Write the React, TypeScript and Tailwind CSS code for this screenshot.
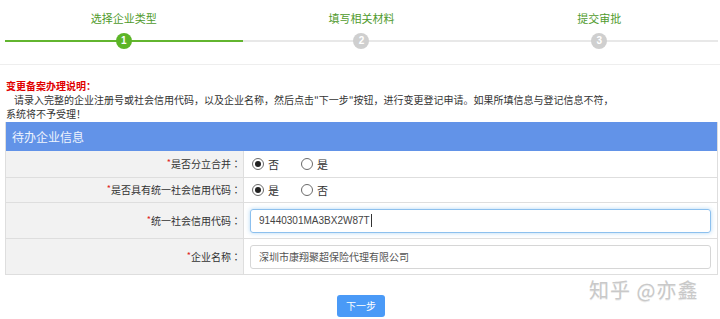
import React from 'react'

const font = { fontFamily: '"Microsoft YaHei", "Noto Sans CJK SC", "Noto Sans", sans-serif' }
const latin = { fontFamily: '"Liberation Sans", Arial, "Noto Sans CJK SC", sans-serif' }
const centered = { fontFamily: '"Noto Sans CJK JP", "Noto Sans CJK SC", sans-serif' }

function Step({ n, label, active }: { n: number; label: string; active: boolean }) {
  return (
    <div className="flex flex-col items-center">
      <div className="h-[33px] flex items-center text-[11px] leading-[14px] text-[#4f9a2c] pt-[3px]">{label}</div>
      <div className="relative w-full h-[16px] flex items-center justify-center">
        <div className={`absolute left-0 right-0 top-[7px] h-[2px] ${active ? 'bg-[#62b52f]' : 'bg-[#e8e8e8]'}`} />
        <div
          className={`relative z-10 w-[16px] h-[16px] rounded-full flex items-center justify-center text-[10px] leading-none font-bold text-white ${
            active ? 'bg-[#5cb527]' : 'bg-[#cfcfcf]'
          }`}
          style={latin}
        >
          {n}
        </div>
      </div>
    </div>
  )
}

function Radio({ checked, label }: { checked: boolean; label: string }) {
  return (
    <span className="inline-flex items-center gap-[4px]">
      <span className="w-[12px] h-[12px] rounded-full border border-[#6a6a6a] bg-white flex items-center justify-center">
        {checked && <span className="w-[6px] h-[6px] rounded-full bg-[#222]" />}
      </span>
      <span className="text-[11px] leading-[14px] text-[#333]">{label}</span>
    </span>
  )
}

function Row({ label, children, h }: { label: string; children: React.ReactNode; h: string }) {
  return (
    <div className={`flex border-b border-[#dedede] ${h}`}>
      <div className="w-[238px] shrink-0 bg-[#f2f2f2] border-r border-[#dedede] flex items-center justify-end pr-[2px] text-[10px] leading-[14px] text-[#333] whitespace-nowrap">
        <span className="inline-flex items-start">
          <span className="text-[#e02020] text-[9px] leading-none mt-[1px]">*</span>
          <span>{label}</span>
          <span style={centered}>：</span>
        </span>
      </div>
      <div className="flex-1 bg-white flex items-center pl-[6px] pr-[6px]">{children}</div>
    </div>
  )
}

export default function App() {
  return (
    <div className="w-[720px] h-[319px] bg-white overflow-hidden relative" style={font}>
      <div className="grid grid-cols-3 pl-[5px] pr-[2px]">
        <Step n={1} label="选择企业类型" active />
        <Step n={2} label="填写相关材料" active={false} />
        <Step n={3} label="提交审批" active={false} />
      </div>
      <div className="mt-[15px] h-px bg-[#eeeeee]" />

      <div className="pl-[6px] pt-[14px] text-[10px] leading-[14px] text-[#333] whitespace-nowrap">
        <div className="text-[#e00000] font-bold">变更备案办理说明：</div>
        <div className="pl-[8px]">
          请录入完整的企业注册号或社会信用代码，以及企业名称，然后点击"下一步"按钮，进行变更登记申请。如果所填信息与登记信息不符，
        </div>
        <div>系统将不予受理！</div>
      </div>

      <div className="ml-[5px] mr-[2px] mt-[1px] border-l border-r border-[#dedede]">
        <div className="h-[29px] bg-[#6293e8] text-[#eef3fd] text-[12px] leading-[14px] flex items-center pl-[6px]">待办企业信息</div>
        <Row label="是否分立合并" h="h-[27px]">
          <div className="flex items-center gap-[22px] pl-[2px]">
            <Radio checked label="否" />
            <Radio checked={false} label="是" />
          </div>
        </Row>
        <Row label="是否具有统一社会信用代码" h="h-[25px]">
          <div className="flex items-center gap-[22px] pl-[2px]">
            <Radio checked label="是" />
            <Radio checked={false} label="否" />
          </div>
        </Row>
        <Row label="统一社会信用代码" h="h-[36px]">
          <div
            className="w-full h-[24px] border border-[#8cc0ee] rounded-[3px] shadow-[0_0_4px_rgba(102,175,233,0.5)] flex items-center pl-[8px] text-[10px] leading-[14px] text-[#444]"
            style={latin}
          >
            91440301MA3BX2W87T<span className="inline-block w-px h-[13px] bg-[#333] ml-px" />
          </div>
        </Row>
        <Row label="企业名称" h="h-[36px]">
          <div className="w-full h-[24px] border border-[#d6d6d6] rounded-[3px] flex items-center pl-[8px] text-[10px] leading-[14px] text-[#555]">
            深圳市康翔聚超保险代理有限公司
          </div>
        </Row>
      </div>

      <div className="flex justify-center mt-[20px]">
        <div className="w-[48px] h-[22px] bg-[#4a9af7] rounded-[3px] text-white text-[10px] leading-[14px] flex items-center justify-center ml-[2px]">
          下一步
        </div>
      </div>

      <div className="absolute left-[589px] top-[277px] text-[20px] leading-[26px] text-[#c9c9c9] tracking-[1px] [text-shadow:0_1px_0_#ececec]">
        知乎 @亦鑫
      </div>
    </div>
  )
}
